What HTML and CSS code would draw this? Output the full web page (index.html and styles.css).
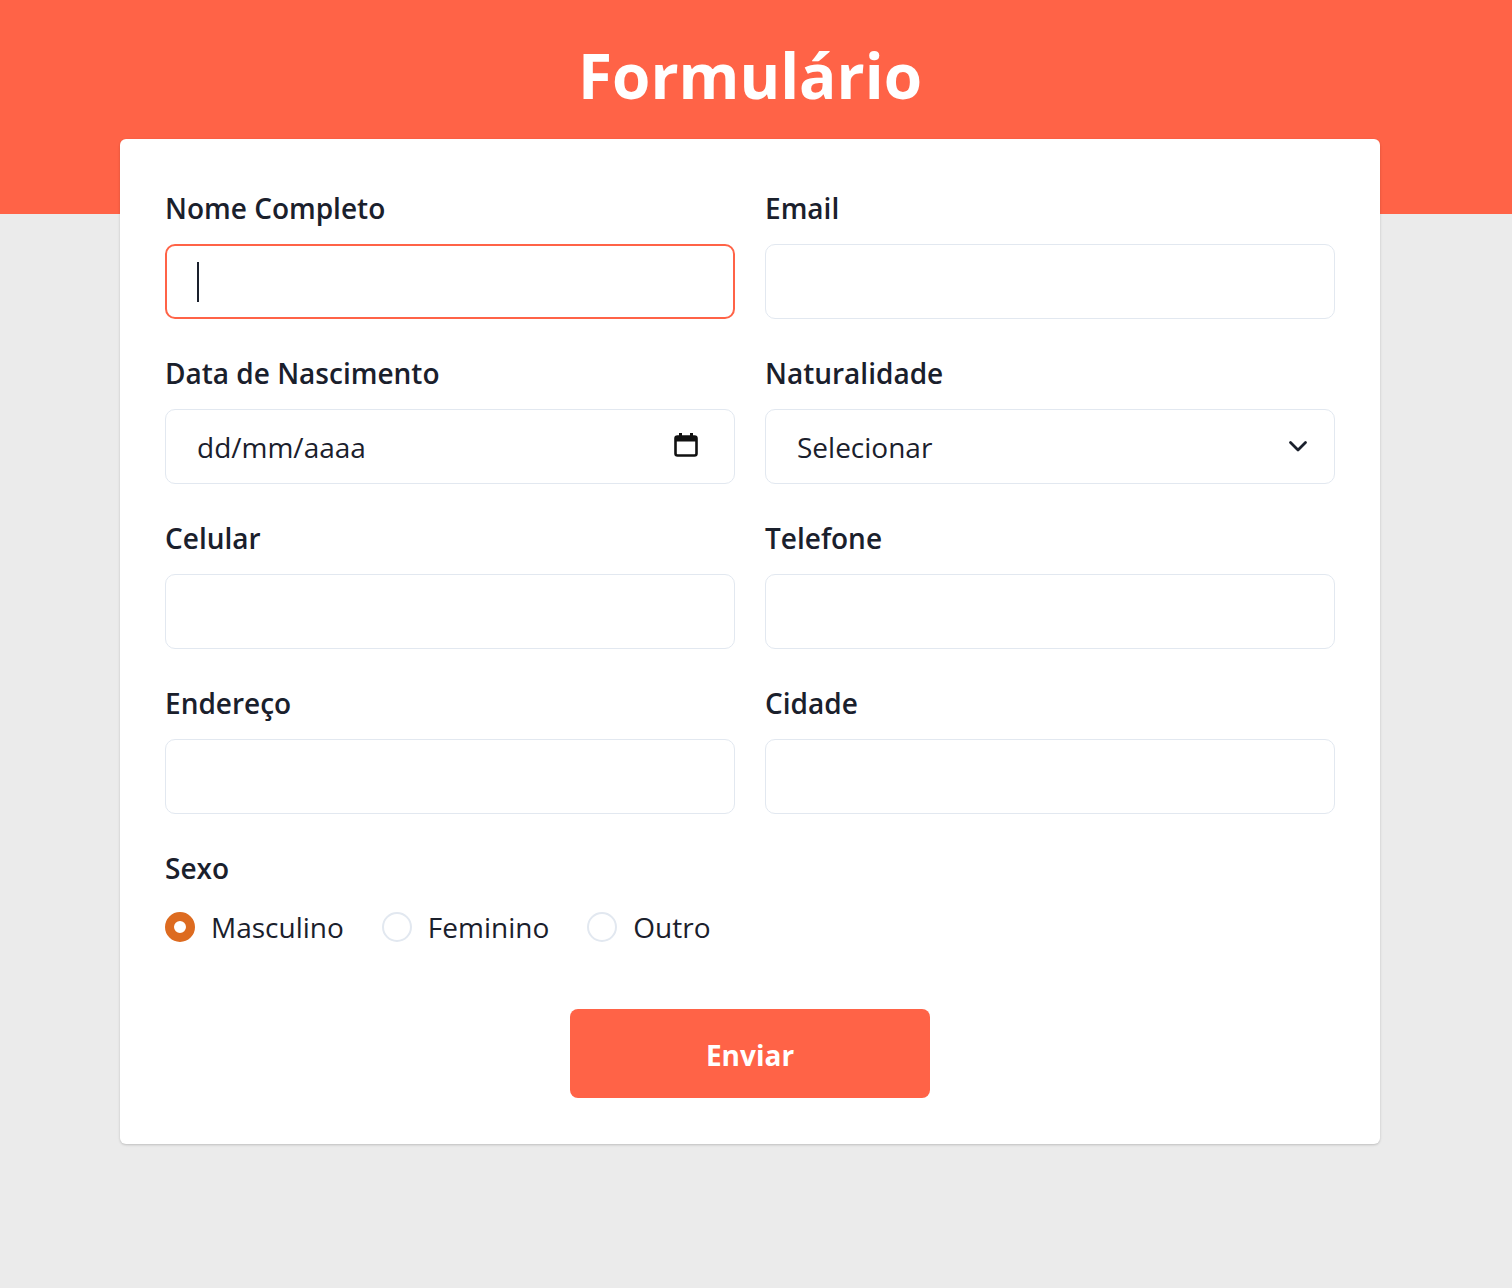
FILE: index.html
```html
<!DOCTYPE html>
<html lang="pt-BR">
<head>
<meta charset="utf-8">
<title>Formulário</title>
<link rel="stylesheet" href="styles.css">
</head>
<body>
<header class="hero">
  <h1 class="hero-title">Formulário</h1>
</header>
<div class="page">
<main class="card">
  <form class="form">
    <div class="grid">
      <div class="field">
        <label class="label">Nome Completo</label>
        <div class="control control-focus">
          <span class="caret"></span>
          <input class="input" type="text">
        </div>
      </div>
      <div class="field">
        <label class="label">Email</label>
        <div class="control">
          <input class="input" type="email">
        </div>
      </div>
      <div class="field">
        <label class="label">Data de Nascimento</label>
        <div class="control control-row">
          <span class="fake-value">dd/mm/aaaa</span>
          <svg class="cal-icon" width="24" height="26" viewBox="0 0 24 26" aria-hidden="true">
            <rect x="1.5" y="4.5" width="21" height="19" rx="2" fill="none" stroke="#111" stroke-width="2.6"/>
            <rect x="1.5" y="4.5" width="21" height="5" fill="#111"/>
            <rect x="5" y="1" width="3" height="5" fill="#111"/>
            <rect x="16" y="1" width="3" height="5" fill="#111"/>
          </svg>
        </div>
      </div>
      <div class="field">
        <label class="label">Naturalidade</label>
        <div class="control control-row">
          <span class="fake-value">Selecionar</span>
          <svg class="chev-icon" width="20" height="14" viewBox="0 0 20 14" aria-hidden="true">
            <path d="M2.5 3.5 L10 11 L17.5 3.5" fill="none" stroke="#1a202c" stroke-width="2.8" stroke-linecap="round" stroke-linejoin="round"/>
          </svg>
        </div>
      </div>
      <div class="field">
        <label class="label">Celular</label>
        <div class="control"><input class="input" type="tel"></div>
      </div>
      <div class="field">
        <label class="label">Telefone</label>
        <div class="control"><input class="input" type="tel"></div>
      </div>
      <div class="field">
        <label class="label">Endereço</label>
        <div class="control"><input class="input" type="text"></div>
      </div>
      <div class="field">
        <label class="label">Cidade</label>
        <div class="control"><input class="input" type="text"></div>
      </div>
    </div>
    <div class="sexo">
      <div class="label">Sexo</div>
      <div class="radios">
        <label class="radio"><span class="dot dot-on"></span><span>Masculino</span></label>
        <label class="radio"><span class="dot"></span><span>Feminino</span></label>
        <label class="radio"><span class="dot"></span><span>Outro</span></label>
      </div>
    </div>
    <div class="actions">
      <button class="btn" type="button">Enviar</button>
    </div>
  </form>
</main>
</div>
</body>
</html>
```
FILE: styles.css
```css
* { box-sizing: border-box; }
html, body { margin: 0; padding: 0; }
body {
  background: #ebebeb;
  font-family: "Open Sans", "Noto Sans", sans-serif;
  color: #1a202c;
  min-height: 1288px;
}
.hero {
  background: #ff6347;
  height: 214px;
  padding-top: 27px;
  padding-right: 12px;
}
.hero-title {
  margin: 0;
  text-align: center;
  color: #fff;
  font-size: 62px;
  line-height: 96px;
  font-weight: 700;
}
.page {
  padding-right: 12px;
}
.card {
  width: 1260px;
  margin: -75px auto 0;
  background: #fff;
  border-radius: 6px;
  box-shadow: 0 1px 3px rgba(0,0,0,0.12), 0 1px 2px rgba(0,0,0,0.08);
  padding: 48px 45px 46px;
}
.grid {
  display: grid;
  grid-template-columns: 1fr 1fr;
  column-gap: 30px;
  row-gap: 33px;
}
.field { display: flex; flex-direction: column; }
.label {
  display: block;
  font-size: 28px;
  line-height: 42px;
  font-weight: 600;
  margin-bottom: 15px;
  color: #1a202c;
}
.control {
  position: relative;
  height: 75px;
  border: 1px solid #e2e8f0;
  border-radius: 10px;
  background: #fff;
}
.control-focus {
  border: 2px solid #ff6347;
}
.control-row {
  display: flex;
  align-items: center;
  padding: 0 31px 0 31px;
}
.input {
  width: 100%;
  height: 100%;
  border: 0;
  outline: none;
  background: transparent;
  padding: 0 30px;
  font-family: inherit;
  font-size: 28px;
  color: #1a202c;
  border-radius: 10px;
}
.caret {
  position: absolute;
  left: 30px;
  top: 16px;
  width: 2px;
  height: 40px;
  background: #1a202c;
}
.fake-value {
  flex: 1;
  font-size: 28px;
  line-height: 42px;
  color: #1a202c;
}
.cal-icon { margin-right: 5px; margin-top: -4px; }
.chev-icon { margin-right: -5px; margin-top: -2px; }
.sexo { margin-top: 33px; }
.sexo .label { margin-bottom: 17px; }
.radios {
  display: flex;
  align-items: center;
  gap: 38px;
  height: 42px;
}
.radio {
  display: flex;
  align-items: center;
  gap: 16px;
  font-size: 28px;
  line-height: 42px;
}
.dot {
  width: 30px;
  height: 30px;
  border-radius: 50%;
  border: 2.5px solid #e2e8f0;
  background: #fff;
  flex: none;
}
.dot-on {
  border: 9.5px solid #dd6b20;
  background: #fff;
}
.actions {
  display: flex;
  justify-content: center;
  margin-top: 61px;
}
.btn {
  width: 360px;
  height: 89px;
  border: 0;
  border-radius: 8px;
  background: #ff6347;
  color: #fff;
  font-family: inherit;
  font-size: 28px;
  font-weight: 700;
  padding-top: 4px;
}
```
